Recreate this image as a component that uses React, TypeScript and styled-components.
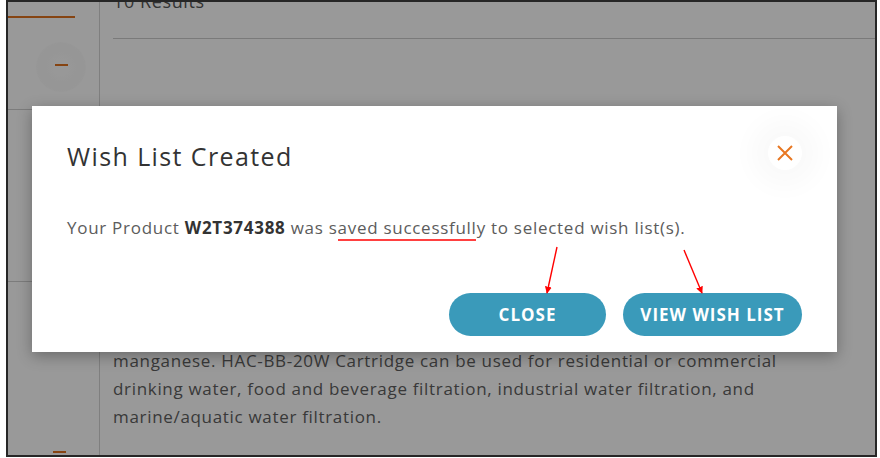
import React from "react";
import styled, { createGlobalStyle } from "styled-components";

const Global = createGlobalStyle`
  html, body { margin: 0; padding: 0; background: #ffffff; }
  body { font-family: "Open Sans", "Liberation Sans", sans-serif; }
  * { box-sizing: border-box; }
`;

const Frame = styled.div`
  position: relative;
  margin-left: 6px;
  width: 871px;
  height: 457px;
  border: 2px solid #262626;
  overflow: hidden;
  background: #ffffff;
`;

const Page = styled.div`
  display: grid;
  grid-template-columns: 92px 1fr;
  height: 100%;
`;

const Sidebar = styled.aside`
  position: relative;
  border-right: 1px solid #d4d4d4;
  display: flex;
  flex-direction: column;
`;

const ActiveTab = styled.div`
  margin-top: 14px;
  width: 67px;
  height: 2px;
  background: #e0721f;
`;

const Toggle = styled.div`
  margin: 24px 0 0 28px;
  width: 50px;
  height: 50px;
  border-radius: 50%;
  background: radial-gradient(circle, #ffffff 0%, #fafafa 55%, #ffffff 100%);
  display: flex;
  justify-content: center;
  padding-top: 22px;
`;

const Dash = styled.span`
  display: block;
  width: 13px;
  height: 2px;
  background: #e0721f;
`;

const Divider = styled.div<{ $top: number }>`
  margin-top: ${(p) => p.$top}px;
  height: 1px;
  background: #cfcfcf;
`;

const BottomDash = styled.div`
  margin: auto 0 0 45px;
  height: 4px;
  display: flex;
  align-items: flex-start;
`;

const Main = styled.main`
  padding-left: 13px;
  display: flex;
  flex-direction: column;
`;

const ResultsHeader = styled.div`
  margin-top: -13px;
  height: 50px;
  border-bottom: 1px solid #cccccc;
  font-size: 18px;
  line-height: 24px;
  letter-spacing: 0.6px;
  color: #555555;
`;

const Description = styled.p`
  margin: 308px 0 0;
  font-size: 17px;
  line-height: 28px;
  letter-spacing: 0.68px;
  color: #606060;
  white-space: nowrap;
`;

const Overlay = styled.div`
  position: absolute;
  inset: 0;
  background: rgba(0, 0, 0, 0.4);
`;

const Modal = styled.div`
  position: absolute;
  left: 24px;
  top: 104px;
  width: 805px;
  height: 246px;
  background: #ffffff;
  box-shadow: 0 4px 14px rgba(0, 0, 0, 0.3);
  padding: 34px 35px 16px 35px;
  display: flex;
  flex-direction: column;
`;

const Title = styled.h2`
  margin: 0;
  font-size: 25px;
  line-height: 32px;
  font-weight: 500;
  letter-spacing: 1.4px;
  color: #333333;
`;

const Message = styled.p`
  margin: 44px 0 0;
  font-size: 17px;
  line-height: 24px;
  letter-spacing: 0.72px;
  color: #5c5c5c;
  white-space: nowrap;
  b { color: #333333; font-weight: 700; }
`;

const Actions = styled.div`
  margin-top: auto;
  display: flex;
  justify-content: flex-end;
  gap: 17px;
`;

const PillButton = styled.button<{ $w: number }>`
  width: ${(p) => p.$w}px;
  height: 43px;
  border: none;
  border-radius: 22px;
  background: #3a9aba;
  color: #ffffff;
  font-family: "Open Sans", "Liberation Sans", sans-serif;
  font-size: 17px;
  font-weight: 700;
  letter-spacing: 1px;
  cursor: pointer;
`;

const CloseIcon = styled.button`
  position: absolute;
  top: 30px;
  right: 35px;
  width: 34px;
  height: 34px;
  border-radius: 50%;
  border: none;
  background: #ffffff;
  box-shadow: 0 0 24px 18px rgba(0, 0, 0, 0.025);
  display: flex;
  align-items: center;
  justify-content: center;
  padding: 0;
  cursor: pointer;
`;

const Marks = styled.svg`
  position: absolute;
  inset: 0;
  pointer-events: none;
`;

export default function App() {
  return (
    <>
      <Global />
      <Frame>
        <Page>
          <Sidebar>
            <ActiveTab />
            <Toggle>
              <Dash />
            </Toggle>
            <Divider $top={17} />
            <Divider $top={171} />
            <BottomDash>
              <Dash />
            </BottomDash>
          </Sidebar>
          <Main>
            <ResultsHeader>10 Results</ResultsHeader>
            <Description>
              manganese. HAC-BB-20W Cartridge can be used for residential or commercial
              <br />
              drinking water, food and beverage filtration, industrial water filtration, and
              <br />
              marine/aquatic water filtration.
            </Description>
          </Main>
        </Page>
        <Overlay />
        <Modal role="dialog">
          <Title>Wish List Created</Title>
          <Message>
            Your Product <b>W2T374388</b> was saved successfully to selected wish list(s).
          </Message>
          <Actions>
            <PillButton $w={157}>CLOSE</PillButton>
            <PillButton $w={179}>VIEW WISH LIST</PillButton>
          </Actions>
          <CloseIcon aria-label="Close">
            <svg width="18" height="18" viewBox="0 0 18 18">
              <path d="M2 2 L16 16 M16 2 L2 16" stroke="#e87722" strokeWidth="2" fill="none" />
            </svg>
          </CloseIcon>
        </Modal>
        <Marks width="871" height="457" viewBox="8 2 871 457">
          <defs>
            <marker id="head" viewBox="0 0 10 10" refX="9" refY="5" markerWidth="5" markerHeight="5" orient="auto">
              <path d="M0 0 L10 5 L0 10 Z" fill="#ff0000" />
            </marker>
          </defs>
          <line x1="338" y1="240" x2="476" y2="240" stroke="#ff0000" strokeWidth="1.6" />
          <line x1="557" y1="247" x2="547" y2="293" stroke="#ff0000" strokeWidth="1.4" markerEnd="url(#head)" />
          <line x1="684" y1="250" x2="702" y2="293" stroke="#ff0000" strokeWidth="1.4" markerEnd="url(#head)" />
        </Marks>
      </Frame>
    </>
  );
}
